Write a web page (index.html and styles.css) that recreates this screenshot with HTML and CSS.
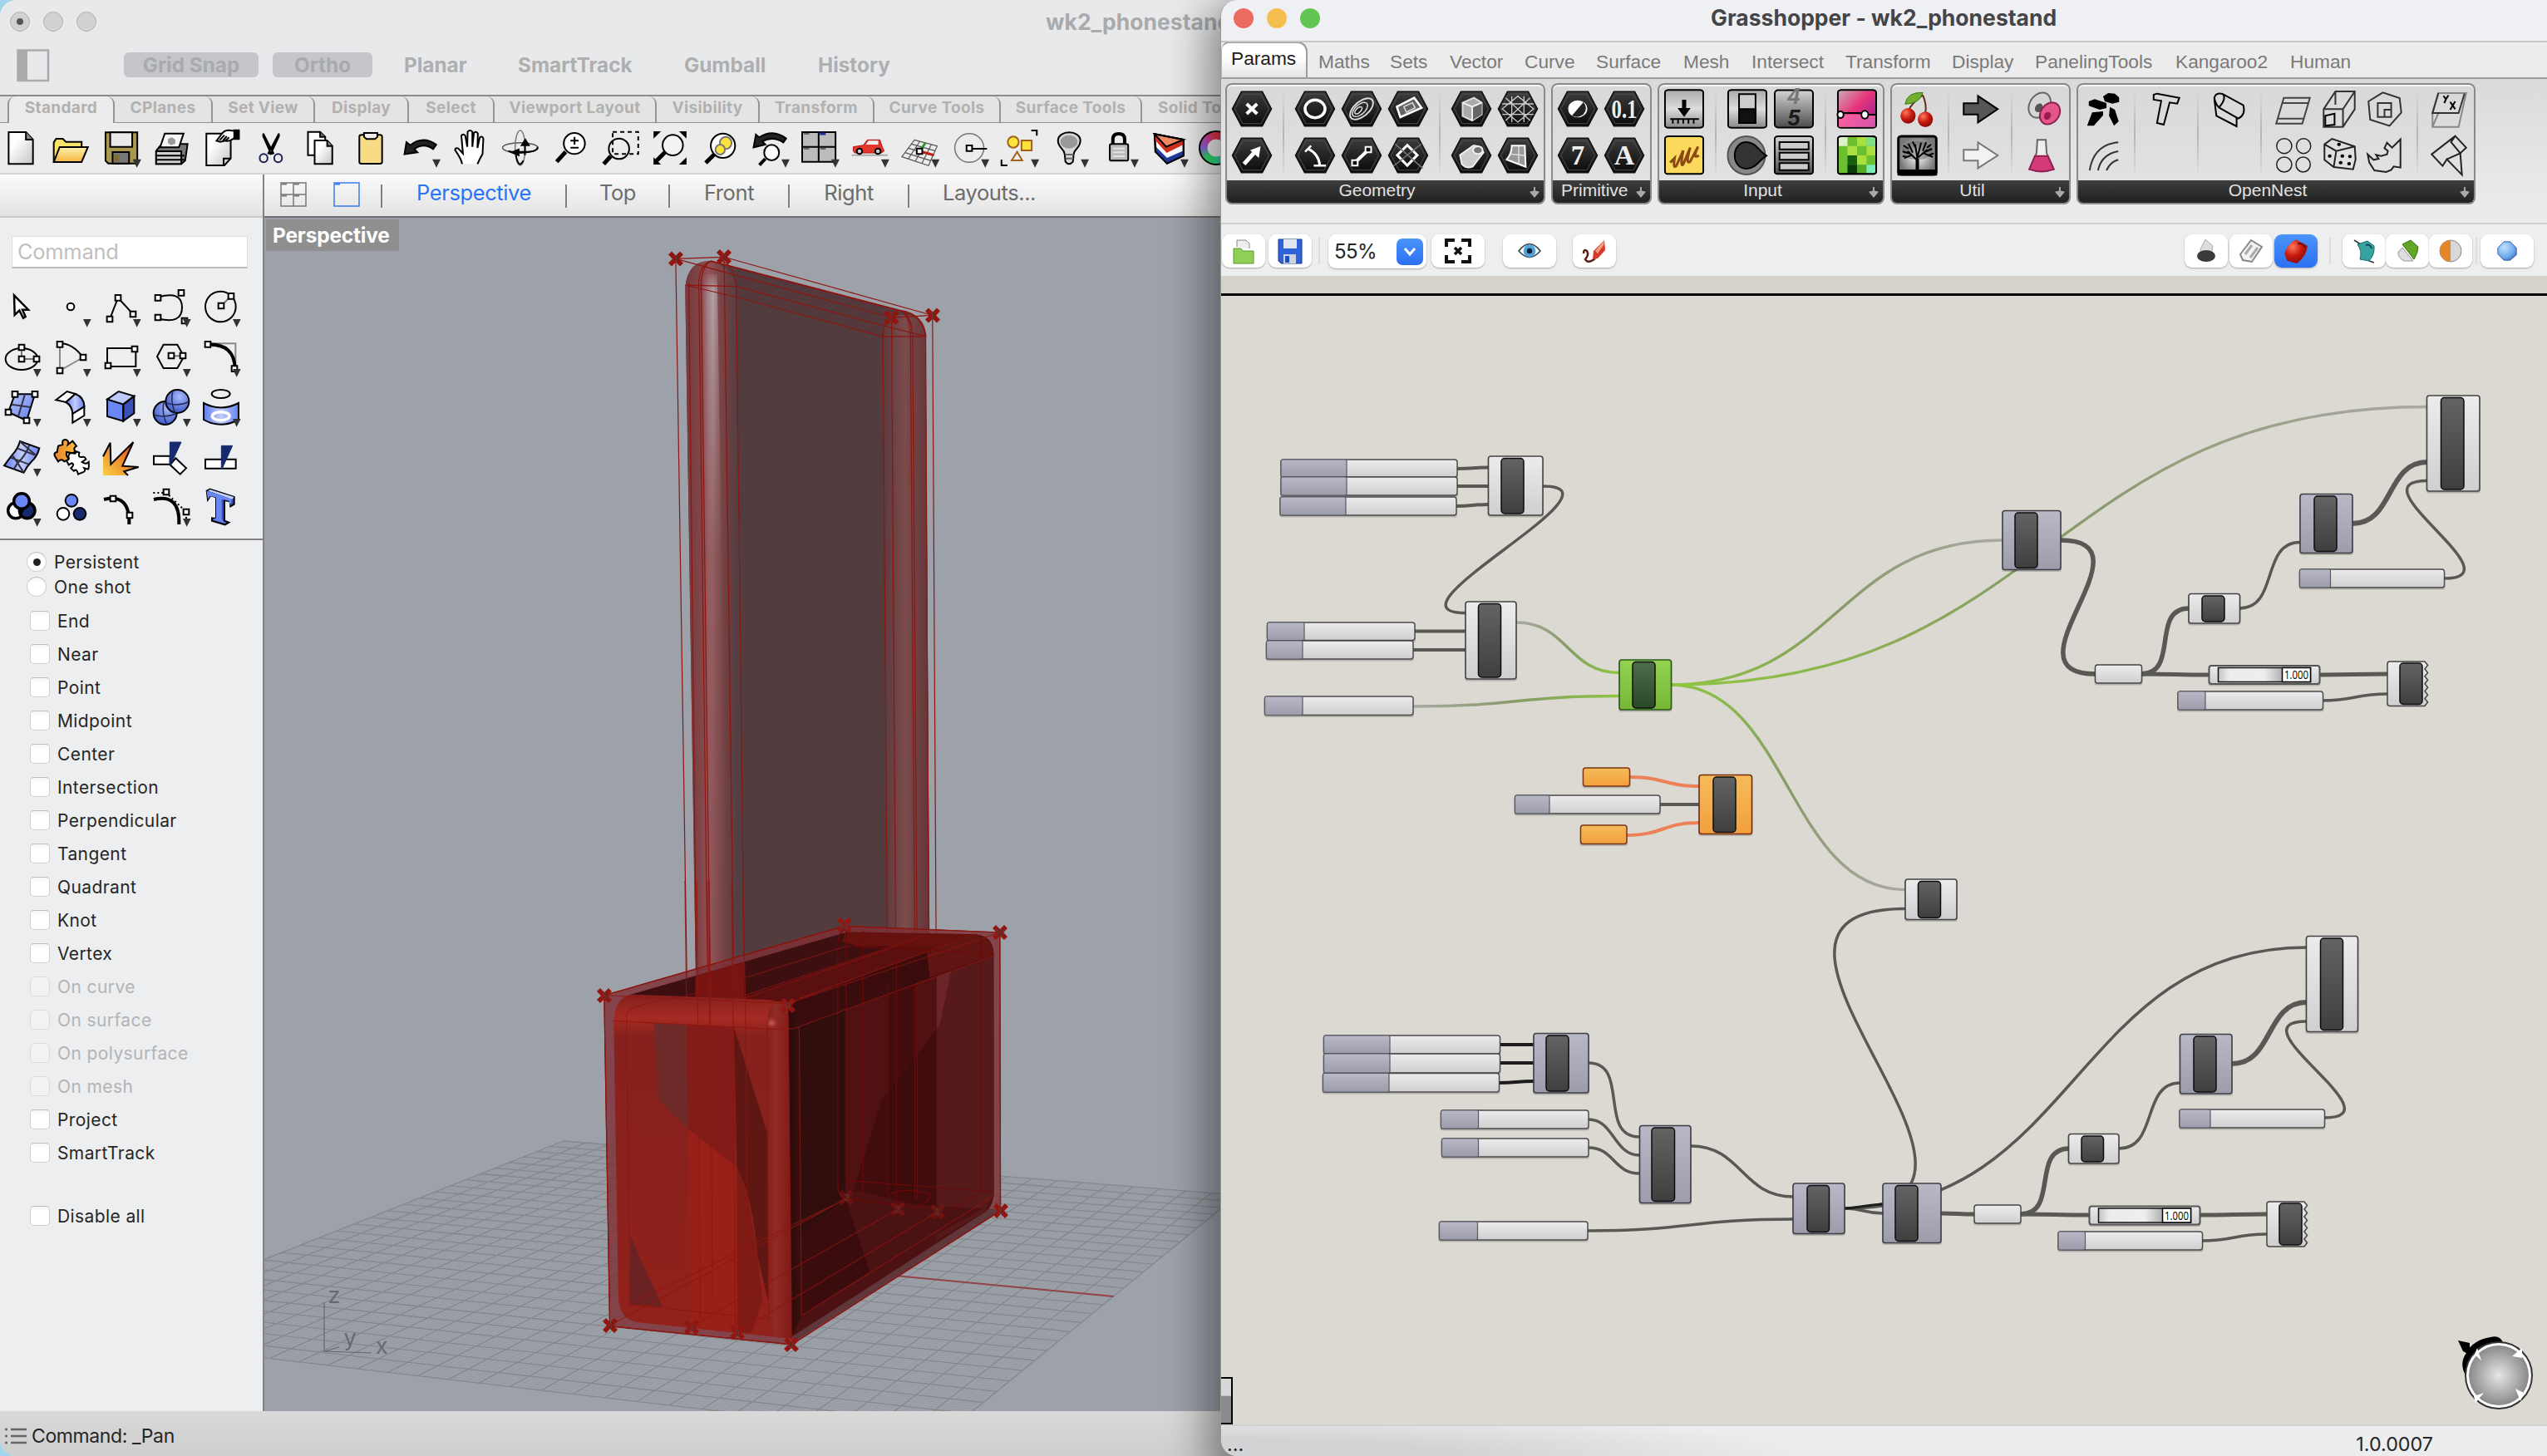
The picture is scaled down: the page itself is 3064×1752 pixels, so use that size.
FILE: index.html
```html
<!DOCTYPE html>
<html lang="en">
<head>
<meta charset="utf-8">
<title>Grasshopper - wk2_phonestand</title>
<link rel="stylesheet" href="styles.css">
</head>
<body>
<svg class="defs" width="0" height="0">
  <defs>
    <rect id="h" class="nss" x="-10" y="-10" width="20" height="20" fill="#fff" stroke="#000" stroke-width="2"/>
    <linearGradient id="gBlue" x1="0" y1="0" x2="1" y2="1"><stop offset="0" stop-color="#b9c6f8"/><stop offset="1" stop-color="#5f7cf0"/></linearGradient>
    <linearGradient id="gBlueH"><stop offset="0" stop-color="#5f7df2"/><stop offset=".5" stop-color="#c3cdf8"/><stop offset="1" stop-color="#6380f3"/></linearGradient>
    <radialGradient id="gBall" cx=".6" cy=".3" r=".7"><stop offset="0" stop-color="#a9b9fa"/><stop offset="1" stop-color="#3f5bc8"/></radialGradient>
    <linearGradient id="gFire" x1="0" y1="1" x2="1" y2="0"><stop offset="0" stop-color="#f8d048"/><stop offset=".5" stop-color="#ee8a2a"/><stop offset="1" stop-color="#dd3418"/></linearGradient>
    <linearGradient id="gPuz"><stop offset="0" stop-color="#e9852a"/><stop offset="1" stop-color="#f8bc3c"/></linearGradient>
    <linearGradient id="gPaper" x1="0" y1="0" x2="1" y2="1"><stop offset=".3" stop-color="#fff"/><stop offset="1" stop-color="#c4c4c4"/></linearGradient>
    <linearGradient id="gGold" x1="0" y1="0" x2="0" y2="1"><stop offset="0" stop-color="#fff3b0"/><stop offset="1" stop-color="#f2b33c"/></linearGradient>
    <linearGradient id="gGrey" x1="0" y1="0" x2="0" y2="1"><stop offset="0" stop-color="#aaa"/><stop offset=".5" stop-color="#ddd"/><stop offset="1" stop-color="#8a8a8a"/></linearGradient>
    <linearGradient id="gGreyDn" x1="0" y1="0" x2="0" y2="1"><stop offset="0" stop-color="#d4d4d4"/><stop offset="1" stop-color="#4c4c4c"/></linearGradient>
    <linearGradient id="gHex" x1="0" y1="0" x2="0" y2="1"><stop offset="0" stop-color="#3c3c3c"/><stop offset="1" stop-color="#0a0a0a"/></linearGradient>
    <linearGradient id="gPink" x1="0" y1="0" x2="1" y2="1"><stop offset="0" stop-color="#c8b0bc"/><stop offset=".45" stop-color="#e8377a"/><stop offset="1" stop-color="#8a1a9a"/></linearGradient>
    <radialGradient id="gRed" cx=".35" cy=".3" r=".8"><stop offset="0" stop-color="#ff7a5c"/><stop offset=".5" stop-color="#c81a10"/><stop offset="1" stop-color="#7c0806"/></radialGradient>
    <radialGradient id="gTree"><stop offset="0" stop-color="#fff"/><stop offset="1" stop-color="#777"/></radialGradient>
    <radialGradient id="gSky" cx=".35" cy=".3" r=".9"><stop offset="0" stop-color="#bfe2ff"/><stop offset=".6" stop-color="#6fa9ea"/><stop offset="1" stop-color="#2c5aa8"/></radialGradient>
    <g id="hex">
      <path class="nss" d="M24 -62 H-24 L-45 0 L-24 62 H24 L45 0Z" fill="url(#gHex)" stroke="#111" stroke-width="1.5"/>
      <path class="nss" d="M21 -53 H-21 L-39 0 L-21 53 H21 L39 0Z" fill="none" stroke="#4c4c4c" stroke-width="1"/>
    </g>
    <path id="mark" d="M-9 -5 L-5 -9 L0 -4 L5 -9 L9 -5 L4 0 L9 5 L5 9 L0 4 L-5 9 L-9 5 L-4 0Z" fill="#93150f"/>
  </defs>
</svg>

<main class="rhino">
  <header class="rh-title">
    <div class="lights off"><i class="edited"></i><i></i><i></i></div>
    <div class="doc">wk2_phonestand</div>
  </header>
  <div class="rh-modes">
    <svg class="side-ic" width="40" height="40" viewBox="0 0 40 40"><path d="M1.500 1.500H38V38H1.500Z" fill="none" stroke="#a9aaac" stroke-width="2.500"/><path d="M1 1H13V39H1Z" fill="#a9aaac"/></svg>
    <span class="pill p1">Grid Snap</span><span class="pill p2">Ortho</span>
    <span class="mode m1">Planar</span><span class="mode m2">SmartTrack</span><span class="mode m3">Gumball</span><span class="mode m4">History</span>
  </div>
  <nav class="rh-tabs">
    <span class="on" style="width:129px">Standard</span><span style="width:118px">CPlanes</span><span style="width:123px">Set View</span><span style="width:113px">Display</span><span style="width:103px">Select</span><span style="width:195px">Viewport Layout</span><span style="width:124px">Visibility</span><span style="width:138px">Transform</span><span style="width:152px">Curve Tools</span><span style="width:170px">Surface Tools</span><span class="lft" style="width:170px">Solid Tools</span>
  </nav>
  <div class="rh-tools">
    <svg class="ic" preserveAspectRatio="none" viewBox="-10.600 444 127.100 180"><path d="M22 477H66L84 504V592H22Z" fill="url(#gPaper)"/><path d="M66 477V504H84" fill="#888"/></svg>
    <svg class="ic" preserveAspectRatio="none" viewBox="116.500 444 127.100 180"><path d="M137 584V514L143 501H160L168 512H208V532" fill="#fbe36a"/><path d="M137 585L152 531H224L208 585Z" fill="url(#gGold)"/></svg>
    <svg class="ic" preserveAspectRatio="none" viewBox="243.700 444 127.100 180"><path d="M269 478H350V590H276L269 580Z" fill="#a89850"/><path d="M281 478H337V530H281Z" fill="#e9e9ec"/><path d="M287 549H329V590H287Z" fill="#777"/><path d="M292 558H304V582H292Z" fill="#7c6e30" stroke="none"/><path class="tri" d="M338 575H360L349 605Z"/></svg>
    <svg class="ic" preserveAspectRatio="none" viewBox="370.800 444 127.100 180"><path d="M398 545L412 520H478L472 580L462 592H398Z" fill="#777"/><path d="M398 546H462V592H398Z" fill="#d0d0d0"/><path d="M398 562H470M398 577H470"/><path d="M408 532L420 482H468L456 532Z" fill="#f6f6f6"/><path d="M428 502L438 496L447 504V518L436 524L428 516Z" fill="#999" stroke="none"/></svg>
    <svg class="ic" preserveAspectRatio="none" viewBox="497.900 444 127.100 180"><path d="M526 482H588V572L572 597H526Z" fill="url(#gPaper)"/><path d="M588 572H570V597"/><path d="M552 508L566 482Q574 468 588 471L606 474V498L596 500Q584 512 574 508L562 512Z" fill="#fff"/><path d="M597 470H609V502H597Z" fill="#000"/><path d="M560 506L572 488M567 510L578 492M575 508L584 496"/></svg>
    <svg class="ic" preserveAspectRatio="none" viewBox="625.100 444 127.100 180"><path d="M671 482L697 553L691 556L671 492ZM711 482L684 553L690 556L711 492Z" fill="#000"/><ellipse cx="672" cy="571" rx="10" ry="15" stroke="#1b2250"/><ellipse cx="709" cy="571" rx="10" ry="15" stroke="#1b2250"/></svg>
    <svg class="ic" preserveAspectRatio="none" viewBox="752.200 444 127.100 180"><path d="M785 476H816L829 494V560H785Z" fill="#fff"/><path d="M816 476V494H829" fill="#777"/><path d="M802 507H834L847 527V592H802Z" fill="url(#gPaper)"/><path d="M834 507V527H847" fill="#888"/></svg>
    <svg class="ic" preserveAspectRatio="none" viewBox="879.400 444 127.100 180"><rect x="916" y="487" width="58" height="104" rx="6" fill="#f7dc85"/><path d="M928 480H962V494L956 502H934L928 494Z" fill="#eee"/></svg>
    <svg class="ic" preserveAspectRatio="none" viewBox="1006.500 444 127.100 180"><path d="M1031 557L1036 513L1046 524Q1078 488 1112 522L1104 538Q1080 514 1056 538L1064 550Z" fill="#222"/><path class="tri" d="M1102 575H1123L1112.500 605Z"/></svg>
    <svg class="ic" preserveAspectRatio="none" viewBox="1133.600 444 127.100 180"><path d="M1178 592Q1176 574 1160 542Q1160 532 1168 536L1180 554L1176 490Q1180 480 1186 490L1191 530L1192 476Q1198 466 1204 476L1204 530L1208 480Q1214 472 1218 482L1217 534L1223 496Q1230 490 1232 500L1230 556Q1222 576 1217 592" fill="#fff"/></svg>
    <svg class="ic" preserveAspectRatio="none" viewBox="1260.800 444 127.100 180"><g stroke-width="1.500"><ellipse cx="1326" cy="533" rx="45" ry="18" stroke="#555"/><ellipse cx="1326" cy="534" rx="13" ry="63" stroke="#777"/></g><path d="M1296 546Q1326 556 1358 546Q1372 540 1370 530M1315 560Q1322 612 1334 580"/><path d="M1338 560V514M1314 548H1350"/><path d="M1330 524L1339 504L1348 524ZM1304 550L1322 540V560Z" fill="#000"/></svg>
    <svg class="ic" preserveAspectRatio="none" viewBox="1387.900 444 127.100 180"><path d="M1419 584L1442 548" stroke-width="5"/><ellipse cx="1464" cy="518" rx="27" ry="38" fill="#fff"/><path d="M1454 508H1475M1464.500 494V522M1454 533H1475"/></svg>

    <svg class="ic" preserveAspectRatio="none" viewBox="-31.800 444 127.100 180"><path d="M-8 592L10 564" stroke-width="5"/><path d="M15 476H80V556H15Z" stroke-dasharray="5 4"/><ellipse cx="31" cy="537" rx="26" ry="37" fill="none"/></svg>
    <svg class="ic" preserveAspectRatio="none" viewBox="95.300 444 127.100 180"><path d="M124 584L148 550" stroke-width="5"/><ellipse cx="168" cy="524" rx="26" ry="37" fill="#f3f3f3"/><path d="M119 474H138L119 500ZM203 474H184L203 500ZM119 594H138L119 568ZM203 594H184L203 568Z" fill="#000" stroke="none"/></svg>
    <svg class="ic" preserveAspectRatio="none" viewBox="222.500 444 127.100 180"><path d="M252 588L275 556" stroke-width="5"/><ellipse cx="296" cy="526" rx="31" ry="44" fill="#fff"/><g fill="#fbe33c" stroke="#777"><ellipse cx="303" cy="516" rx="15" ry="22"/><ellipse cx="289" cy="540" rx="12" ry="18"/></g></svg>
    <svg class="ic" preserveAspectRatio="none" viewBox="349.600 444 127.100 180"><path d="M374 532L380 486L388 496Q424 464 457 500L450 514Q424 490 396 510L404 522Z" fill="#222"/><path d="M389 596L404 573" stroke-width="4"/><ellipse cx="420" cy="551" rx="19" ry="28" fill="#fff"/><path class="tri" d="M445 575H466L455.500 605Z"/></svg>
    <svg class="ic" preserveAspectRatio="none" viewBox="476.800 444 127.100 180"><path d="M498 477H583V584H498Z" fill="#bcbcbc"/><path d="M540 477V584M498 530H583"/><path d="M502 483H516M502 537H516M544 537H558" stroke="#666" stroke-width="2"/><path d="M543 483H558" stroke="#1a2f9c" stroke-width="3"/><path class="tri" d="M572 575H593L582.500 605Z"/></svg>
    <svg class="ic" preserveAspectRatio="none" viewBox="603.900 444 127.100 180"><path d="M624 560H716" stroke="#aaa"/><path d="M628 545V530L654 524L664 505H696L702 530L707 545L700 552H632Z" fill="#e5352a" stroke="#b3160e" stroke-width="1"/><path d="M667 508H692V522H660Z" fill="#eee" stroke="none"/><ellipse cx="644" cy="546" rx="7" ry="10" fill="#ccc"/><ellipse cx="691" cy="546" rx="7" ry="10" fill="#ccc"/><path class="tri" d="M699 575H720L709.500 605Z"/></svg>
    <svg class="ic" preserveAspectRatio="none" viewBox="731 444 127.100 180"><g stroke="#555" stroke-width="1.200"><path d="M784 505L842 527L820 598L752 566ZM777 520L838 545M769 535L832 562M760 551L826 580M798 510L768 574M813 516L786 582M827 522L803 590"/></g><path d="M797 546L812 516" stroke="#35952a" stroke-width="3"/><path d="M797 546L834 560" stroke="#c31d12" stroke-width="3"/><path d="M790 536H804V556H790Z" fill="#fff"/><path class="tri" d="M827 575H848L837.500 605Z"/></svg>
    <svg class="ic" preserveAspectRatio="none" viewBox="858.200 444 127.100 180"><ellipse cx="924" cy="534" rx="37" ry="52" stroke="#777" stroke-width="1.500"/><path d="M924 537H969"/><path d="M917 525H931V545H917Z" fill="#fff"/><path class="tri" d="M954 575H975L964.500 605Z"/></svg>
    <svg class="ic" preserveAspectRatio="none" viewBox="985.300 444 127.100 180"><path d="M1082 471H1096V490M1006 576V597H1021"/><g stroke="#a0621c" fill="#fbe33c"><ellipse cx="1036" cy="513" rx="14" ry="20"/><path d="M1057 507H1083V543H1057Z"/><path d="M1046 548L1059 579H1032Z" fill="none"/></g><path class="tri" d="M1081 575H1102L1091.500 605Z"/></svg>
    <svg class="ic" preserveAspectRatio="none" viewBox="1112.400 444 127.100 180"><path d="M1167 556C1166 536 1150 534 1150 508C1150 468 1207 468 1207 508C1207 534 1192 536 1190 556L1188 584Q1178 600 1169 584Z" fill="#d8d8d8"/><ellipse cx="1178" cy="512" rx="22" ry="24" fill="#999" stroke="none"/><path d="M1168 558H1190M1169 572H1189" stroke="#666"/><path class="tri" d="M1208 575H1229L1218.500 605Z"/></svg>
    <svg class="ic" preserveAspectRatio="none" viewBox="1239.600 444 127.100 180"><path d="M1290 522V502Q1290 483 1305 483Q1320 483 1320 502V522" stroke-width="4"/><rect x="1282" y="520" width="47" height="60" rx="5" fill="#bbb"/><path d="M1290 536H1320M1290 550H1320M1290 564H1320" stroke="#e4e4e4"/><path class="tri" d="M1335 575H1356L1345.500 605Z"/></svg>
    <svg class="ic" preserveAspectRatio="none" viewBox="1366.700 444 127.100 180"><path d="M1396 484L1470 504V562L1428 590L1400 548Z" fill="#fff"/><path d="M1396 484L1470 504L1425 532Z" fill="#f08a62"/><path d="M1425 532L1470 504V522L1427 552L1400 510L1396 490Z" fill="#d4301c" stroke="none"/><path d="M1428 570L1470 544V562L1428 590L1400 552V530Z" fill="#1e3a9c" stroke="none"/><path d="M1396 484L1470 504V562L1428 590L1398 548ZM1396 484L1426 530L1470 504"/><path class="tri" d="M1462 575H1483L1472.500 605Z"/></svg>
    <div class="wheel"></div>
  </div>

  <div class="rh-body">
    <aside class="panel">
      <div class="panel-head"></div>
      <div class="cmd">Command</div>
      <div class="toolgrid">
        <svg class="ic" viewBox="-15 207 180 180"><path d="M51 256L102 308L81 308L92 333L84 338L70 311L53 327Z" fill="#fff" stroke-width="2.500"/></svg>
        <svg class="ic" viewBox="165 207 180 180"><circle cx="255" cy="297" r="13" fill="#fff"/><path class="tri" d="M300 342H329L314 371Z"/></svg>
        <svg class="ic" viewBox="345 207 180 180"><path d="M396 342L426 265L480 324"/><use href="#h" x="396" y="342"/><use href="#h" x="426" y="265"/><use href="#h" x="480" y="324"/><path class="tri" d="M480 342H509L494 371Z"/></svg>
        <svg class="ic" viewBox="525 207 180 180"><path d="M570 263Q657 238 657 300Q657 362 570 340"/><use href="#h" x="570" y="265"/><use href="#h" x="654" y="247"/><use href="#h" x="570" y="336"/><use href="#h" x="666" y="348"/><path class="tri" d="M660 342H689L674 371Z"/></svg>
        <svg class="ic" viewBox="705 207 180 180"><circle cx="796" cy="297" r="55"/><path d="M798 294L834 259" stroke="#777"/><use href="#h" x="798" y="294"/><use href="#h" x="834" y="259"/><path class="tri" d="M840 342H869L854 371Z"/></svg>

        <svg class="ic" viewBox="-15 387 180 180"><ellipse cx="78" cy="486" rx="58" ry="39"/><path d="M78 445V486H132" stroke="#777"/><use href="#h" x="78" y="444"/><use href="#h" x="78" y="486"/><use href="#h" x="132" y="486"/><path class="tri" d="M120 522H149L134 551Z"/></svg>
        <svg class="ic" viewBox="165 387 180 180"><path d="M216 528V433M216 528L300 480" stroke="#888"/><path d="M216 430Q260 428 300 480"/><use href="#h" x="216" y="433"/><use href="#h" x="300" y="480"/><use href="#h" x="216" y="528"/><path class="tri" d="M300 522H329L314 551Z"/></svg>
        <svg class="ic" viewBox="345 387 180 180"><path d="M387 447H490V513H387Z"/><use href="#h" x="486" y="450"/><use href="#h" x="390" y="510"/><path class="tri" d="M480 522H509L494 551Z"/></svg>
        <svg class="ic" viewBox="525 387 180 180"><path d="M590 434H640L664 477L640 519H590L567 477Z"/><path d="M618 475H660" stroke="#777"/><use href="#h" x="618" y="474"/><use href="#h" x="660" y="474"/><path class="tri" d="M660 522H689L674 551Z"/></svg>
        <svg class="ic" viewBox="705 387 180 180"><path d="M750 430H850V520" stroke="#888"/><path d="M750 434Q846 430 848 520" stroke-width="4"/><use href="#h" x="750" y="433"/><use href="#h" x="846" y="521"/><path class="tri" d="M840 522H869L854 551Z"/></svg>

        <svg class="ic" viewBox="-15 567 180 180"><path d="M54 613H126L96 708L30 678Z" fill="url(#gBlue)"/><path d="M90 613L66 693M42 650L110 660" stroke="#334"/><use href="#h" x="54" y="613"/><use href="#h" x="126" y="613"/><use href="#h" x="30" y="678"/><use href="#h" x="96" y="708"/><path class="tri" d="M120 702H149L134 731Z"/></svg>
        <svg class="ic" viewBox="165 567 180 180"><path d="M202 634L242 603L272 612L238 642Z" fill="#fff"/><path d="M272 612Q304 624 304 658L262 684Q260 654 238 642Z" fill="url(#gBlueH)"/><path d="M304 658V690L262 716V684Z" fill="#fff"/><path class="tri" d="M300 702H329L314 731Z"/></svg>
        <svg class="ic" viewBox="345 567 180 180"><path d="M387 632L428 603L484 620L445 650Z" fill="#bccaf9"/><path d="M387 632L445 650V710L387 693Z" fill="#6b87f6"/><path d="M445 650L484 620V682L445 710Z" fill="#3950b6"/><path class="tri" d="M480 702H509L494 731Z"/></svg>
        <svg class="ic" viewBox="525 567 180 180"><circle cx="596" cy="681" r="42" fill="url(#gBall)"/><circle cx="640" cy="639" r="42" fill="url(#gBall)"/><path d="M598 644Q640 660 682 640M624 600Q614 640 632 680M556 688Q596 700 634 684M592 640Q582 680 602 722" stroke="#222a55" stroke-width="1.500"/><path class="tri" d="M660 702H689L674 731Z"/></svg>
        <svg class="ic" viewBox="705 567 180 180"><ellipse cx="797" cy="612" rx="33" ry="15"/><path d="M735 645Q797 678 861 645V705Q797 740 735 705Z" fill="url(#gBlueH)"/><ellipse cx="797" cy="692" rx="31" ry="15" stroke="#fff" stroke-width="3.500"/><path class="tri" d="M840 702H869L854 731Z"/></svg>

        <svg class="ic" viewBox="-15 747 180 180"><path d="M72 783L142 808Q134 840 112 858Q98 872 86 896L15 871Q30 850 44 832Q64 812 72 783Z" fill="url(#gBlueH)"/><path d="M106 796Q98 822 78 846Q60 862 50 884M62 808L130 834M38 842L104 866M72 784L130 834M44 832L86 896" stroke="#334"/><path class="tri" d="M120 882H149L134 911Z"/></svg>
        <svg class="ic" viewBox="165 747 180 180"><path d="M210 800L226 795Q222 776 237 777Q250 780 245 795L262 782L276 800Q262 808 272 820L262 826L240 822Q236 838 252 848L232 856Q222 844 210 856L200 840Q190 824 206 822Z" fill="url(#gPuz)"/><path d="M252 826L264 826Q272 830 276 820L286 824Q280 842 296 840Q306 836 310 848L296 858Q310 868 320 858Q322 880 318 884L304 880Q312 892 296 896L282 902Q278 880 266 890L256 880Q272 866 258 862L248 868L240 852Q254 850 246 838Z" fill="#fff"/></svg>
        <svg class="ic" viewBox="345 747 180 180"><path d="M372 906V834L398 788L402 866L481 786L444 872L500 876L448 892L462 906Z" fill="url(#gFire)" stroke="none"/><path d="M372 838L398 788L400 866L481 786L442 872L500 876L448 892L462 906"/></svg>
        <svg class="ic" viewBox="525 747 180 180"><path d="M555 836H614V866H555ZM614 868L634 844L672 880L650 902Z" fill="#fff"/><path d="M613 786H654L616 868H613Z" fill="#172a6e" stroke="#172a6e" stroke-width="1"/></svg>
        <svg class="ic" viewBox="705 747 180 180"><path d="M741 848H851V881H741Z" fill="#fff"/><path d="M799 799H839L802 881H799Z" fill="#172a6e" stroke="#172a6e" stroke-width="1"/></svg>

        <svg class="ic" viewBox="-15 927 180 180"><g stroke-width="3.500"><circle cx="57" cy="1033" r="28" fill="#fff"/><circle cx="98" cy="1033" r="28" fill="#172a6e"/><circle cx="78" cy="999" r="28" fill="#6b87f6"/></g><path d="M68 1026H90L79 1046Z" fill="#000" stroke="none"/><path class="tri" d="M120 1062H149L134 1091Z"/></svg>
        <svg class="ic" viewBox="165 927 180 180"><circle cx="258" cy="997" r="22" fill="#6b87f6"/><circle cx="228" cy="1045" r="22" fill="#fff"/><circle cx="288" cy="1045" r="22" fill="#172a6e"/></svg>
        <svg class="ic" viewBox="345 927 180 180"><path d="M375 993Q470 970 466 1083" stroke-width="4"/><use href="#h" x="408" y="990"/><use href="#h" x="468" y="1050"/></svg>
        <svg class="ic" viewBox="525 927 180 180"><path d="M555 993Q650 970 646 1083" stroke-width="4"/><path d="M553 969H600L672 1038V1084" stroke-dasharray="2 3"/><use href="#h" x="600" y="966"/><use href="#h" x="672" y="1038"/><path class="tri" d="M660 1062H689L674 1091Z"/></svg>
        <svg class="ic" viewBox="705 927 180 180"><path d="M746 962L758 956L845 984V1010L832 1018L830 1000L810 996V1070L826 1076L812 1084L765 1070V1060L780 1062V986L760 978L750 994Z" fill="#3950b6"/><path d="M746 962L836 992L832 1016L826 998L800 992V1066L814 1080L768 1066L780 1060V986L758 980L750 992Z" fill="#6b87f6" stroke="none"/><path d="M752 962L758 957L844 984L838 992Z" fill="#c6d1fa" stroke="none"/></svg>
      </div>
      <div class="snaps">
        <label class="rad"><i class="sel"></i>Persistent</label>
        <label class="rad"><i></i>One shot</label>
        <div class="checks">
          <label><i></i>End</label><label><i></i>Near</label><label><i></i>Point</label><label><i></i>Midpoint</label><label><i></i>Center</label><label><i></i>Intersection</label><label><i></i>Perpendicular</label><label><i></i>Tangent</label><label><i></i>Quadrant</label><label><i></i>Knot</label><label><i></i>Vertex</label><label class="dis"><i></i>On curve</label><label class="dis"><i></i>On surface</label><label class="dis"><i></i>On polysurface</label><label class="dis"><i></i>On mesh</label><label><i></i>Project</label><label><i></i>SmartTrack</label><label class="last"><i></i>Disable all</label>
        </div>
      </div>
    </aside>
    <section class="view">
      <div class="viewbar">
        <svg width="32" height="30" viewBox="0 0 32 30"><path d="M1 1H31V29H1ZM16 1V29M1 15H31" fill="none" stroke="#777" stroke-width="1.500"/><path d="M2 2.500H8M17 2.500H23M2 16.500H8M17 16.500H23" stroke="#777" stroke-width="2"/></svg>
        <svg class="one" width="32" height="30" viewBox="0 0 32 30"><path d="M1 1H31V29H1Z" fill="none" stroke="#3b7cf0" stroke-width="1.500"/><path d="M2 2.500H8" stroke="#2a73f5" stroke-width="2"/></svg>
        <b style="margin-left:25px"></b><span class="cur" style="width:220px">Perspective</span><b></b><span style="width:122px">Top</span><b></b><span style="width:142px">Front</span><b></b><span style="width:142px">Right</span><b></b><span style="width:192px">Layouts...</span>
      </div>
      <div class="scene">
        <svg id="viewport" width="1150" height="1436" viewBox="318 262 1150 1436">
          <defs>
            <linearGradient id="sl" gradientUnits="userSpaceOnUse" x1="385" y1="0" x2="552" y2="0"><stop offset="0" stop-color="#763c40"/><stop offset=".28" stop-color="#834548"/><stop offset=".42" stop-color="#925256"/><stop offset=".55" stop-color="#854a4d"/><stop offset=".8" stop-color="#6c3f41"/><stop offset="1" stop-color="#523f44"/></linearGradient>
            <linearGradient id="shine"><stop offset="0" stop-color="#b4abb0" stop-opacity="0"/><stop offset=".45" stop-color="#b4abb0"/><stop offset="1" stop-color="#b08084" stop-opacity="0"/></linearGradient>
            <linearGradient id="fade" x1="0" y1="0" x2="0" y2="1"><stop offset="0" stop-color="#000"/><stop offset=".03" stop-color="#eee"/><stop offset=".15" stop-color="#aaa"/><stop offset=".4" stop-color="#333"/><stop offset="1" stop-color="#0c0c0c"/></linearGradient>
            <mask id="fadem" maskUnits="userSpaceOnUse" x="400" y="120" width="160" height="1600"><rect x="400" y="120" width="160" height="1600" fill="url(#fade)"/></mask>
            <linearGradient id="sr" gradientUnits="userSpaceOnUse" x1="1042" y1="0" x2="1190" y2="0"><stop offset="0" stop-color="#573b3f"/><stop offset=".25" stop-color="#6b4245"/><stop offset=".5" stop-color="#7c4c4c"/><stop offset=".7" stop-color="#714244"/><stop offset="1" stop-color="#67383a"/></linearGradient>
            <linearGradient id="fr" x1="0" y1="0" x2="0" y2="1"><stop offset="0" stop-color="#84211c"/><stop offset=".07" stop-color="#a62a23"/><stop offset=".12" stop-color="#86211d"/><stop offset="1" stop-color="#92211b"/></linearGradient>
            <linearGradient id="col"><stop offset="0" stop-color="#84201b"/><stop offset=".35" stop-color="#902a25"/><stop offset="1" stop-color="#801a15"/></linearGradient>
            <linearGradient id="darkcol"><stop offset="0" stop-color="#2c0909"/><stop offset="1" stop-color="#3a1010"/></linearGradient>
            <radialGradient id="spot"><stop offset="0" stop-color="#c8605a"/><stop offset="1" stop-color="#a82a22" stop-opacity="0"/></radialGradient>
          </defs>
          <g id="floor"></g>
          <g class="edge" transform="translate(690 260) scale(.35714 .5357)">
            <path d="M376 160Q384 100 462 101L1105 213Q1180 225 1186 270L1200 1730H412Z" fill="#523c3d" stroke="none"/>
            <path d="M376 160Q386 104 445 102Q530 104 548 158L576 1730H412Z" fill="url(#sl)" stroke="none"/>
            <path d="M428 130H484L520 1700H456Z" fill="url(#shine)" stroke="none" mask="url(#fadem)"/>
            <path d="M1042 268Q1046 224 1075 222L1130 222Q1182 228 1186 270L1200 1730H1058Z" fill="url(#sr)" stroke="none"/>
            <path d="M548 118L1105 213L1060 240Q1044 248 1042 268L548 180Z" fill="#53393b" stroke="none"/>
            <path d="M344 96L507 92L1209 223L1071 228ZM344 96L382 1730M507 92L540 1730M1071 228L1086 1730M1209 223L1222 1730"/>
            <path d="M376 155L548 158L1042 246L1186 270L1042 271L548 182ZM388 150L414 1730M422 150Q424 110 462 101M422 150L452 1730M430 150Q434 108 465 101M430 150L460 1730M548 158Q540 108 500 102M548 158L575 1730M1042 268L1058 1730M1042 268Q1046 228 1075 222M1135 268Q1134 230 1108 214M1135 268L1150 1730M1142 268Q1140 232 1115 216M1142 268L1158 1730M1186 268L1197 1730"/>
            <path d="M462 101L1105 213Q1178 222 1186 270" stroke-width="2"/>
          </g>
          <g class="edge" transform="translate(690 1060) scale(.35714 .38265)">
            <path d="M103 360L912 142L1436 162L1438 1037L735 1458L122 1400Z" fill="#7e3036" fill-opacity=".82"/>
            <path d="M733 1455L1438 1037L1400 1030L733 1400Z" fill="#5f363a" stroke="none"/>
            <path d="M190 358L905 165L1350 168L722 388Z" fill="#3d0f10" stroke="none"/>
            <path d="M410 299L575 255V372L410 366Z" fill="#8e1812" fill-opacity=".7" stroke="none"/>
            <path d="M570 370L1050 215L1190 165L1360 168L722 388Z" fill="#5a100f" stroke="none"/>
            <path d="M915 160L1360 168L1240 208L960 205L905 192Z" fill="#65120f" stroke="none"/>
            <path d="M722 388L1350 168Q1415 172 1415 230L1416 985Q1410 1030 1380 1045L733 1435Z" fill="#4c1213" stroke="none"/>
            <path d="M722 388L1350 168Q1412 176 1415 232L760 458Z" fill="#3a0c0d" stroke="none"/>
            <path d="M1190 225L1350 168Q1412 176 1415 232L1200 303Z" fill="#611512" stroke="none"/>
            <path d="M760 458L918 405V1000L765 1120Z" fill="#300e0e" stroke="none"/>
            <path d="M918 405L1222 300V1000L945 975L918 1005Z" fill="#470d0d" stroke="none"/>
            <path d="M1222 300L1272 284L1235 450L1222 470Z" fill="#6b2427" stroke="none"/>
            <path d="M1222 470L1235 450L1272 284L1415 235V985L1385 1040L1222 1130Z" fill="#561a1b" stroke="none"/>
            <path d="M1222 470L1040 685L985 850L945 970L918 1005V405L1222 300V470Z" fill="#4f1112" stroke="none"/>
            <path d="M1222 470L1040 685L985 850L945 970L1222 1035Z" fill="#400c0d" stroke="none"/>
            <path d="M1058 350L1152 320V990H1058Z" fill="#380909" fill-opacity=".5" stroke="none"/>
            <path d="M765 1120L918 1005L998 1228L768 1366Z" fill="#3a0c0d" stroke="none"/>
            <path d="M918 1005L1380 1030L998 1228Z" fill="#4a1213" stroke="none"/>
            <path d="M722 388Q758 400 760 460L768 1370L733 1435Z" fill="url(#darkcol)" stroke="none"/>
            <path d="M135 440Q140 362 200 357L655 374Q722 380 724 440L734 1440L215 1388Q155 1380 151 1310Z" fill="url(#fr)" stroke="none"/>
            <path d="M270 448L380 452L386 780L288 690Z" fill="#6f2b2a" stroke="none"/>
            <path d="M380 452L540 460L545 900L386 780Z" fill="#831c18" stroke="none"/>
            <path d="M540 460L655 800V1320L620 1180Q605 1000 550 900Z" fill="#5f1713" stroke="none"/>
            <path d="M386 780L550 900L552 1420L396 1406Z" fill="#982018" stroke="none"/>
            <path d="M550 900Q605 1000 635 1320L600 1420L552 1420Z" fill="#7e1b15" stroke="none"/>
            <path d="M190 1115L300 1340L190 1332Z" fill="#6b2222" stroke="none"/>
            <path d="M651 440Q660 378 695 378Q722 385 724 440L734 1436H690Q660 1430 657 1370Z" fill="url(#col)" stroke="none"/>
            <ellipse cx="667" cy="446" rx="24" ry="22" fill="url(#spot)" stroke="none"/>
            <g stroke="#6b0a08"><path d="M890 200V960Q892 995 918 1000L1200 1030M918 150V1000M975 200V960Q972 1010 918 1000M1058 330V990M1087 230V1030M1150 325V1000M1158 322V1000M1374 180V980L1220 1060M920 205L1415 228M920 942L1415 978M1062 990Q1100 960 1200 985Q1200 1010 1160 1020M975 155Q976 180 975 200M890 200Q892 160 918 150"/></g>
            <path d="M103 360L722 385L735 1458M722 385L1436 162M135 440L651 465Q740 470 760 458L1415 235M760 458L768 1366L1416 990M178 420L190 1332L657 1378M190 1332L918 1000M375 0L380 365M415 0L427 1380M450 0L460 500M457 0L468 1300M533 0L545 1400M570 0L580 460L587 1378M651 440L657 1378M570 370L1060 215M545 370L1190 170M760 370L1350 168M178 420Q180 390 380 362M380 362L920 205M122 1398L918 1000M397 1400L1087 1035M551 1420L1227 1040" stroke-opacity=".75"/>
            <path d="M103 360L122 1400L735 1458L1438 1037L1436 162L912 142Z" stroke-width="1.200"/>
          </g>
          <g class="marks">
            <use href="#mark" x="813" y="311.500"/><use href="#mark" x="871" y="309"/><use href="#mark" x="1072.500" y="382"/><use href="#mark" x="1122" y="379.500"/>
            <use href="#mark" x="727" y="1198"/><use href="#mark" x="948" y="1210"/><use href="#mark" x="1016" y="1113"/><use href="#mark" x="1203" y="1122"/><use href="#mark" x="1204" y="1457"/><use href="#mark" x="734" y="1595"/><use href="#mark" x="832" y="1597"/><use href="#mark" x="887" y="1603"/><use href="#mark" x="952" y="1618"/>
            <g opacity=".45"><use href="#mark" x="1018" y="1441"/><use href="#mark" x="1080" y="1455"/><use href="#mark" x="1128" y="1458"/></g>
            <text x="813" y="315">3</text><text x="871" y="313">0</text><text x="1072" y="386">2</text><text x="1122" y="383">1</text>
            <text x="727" y="1202">3</text><text x="948" y="1214">0</text><text x="1016" y="1118">61</text><text x="1203" y="1126">10</text><text x="734" y="1599">3</text><text x="832" y="1601">3</text><text x="887" y="1608">0</text><text x="952" y="1622">0</text><text x="1019" y="1445">2</text><text x="1080" y="1459">2</text><text x="1128" y="1462">1</text><text x="1204" y="1461">1</text>
          </g>
          <path d="M390 1567V1626L447 1628M390 1626L408 1621" fill="none" stroke="#666" stroke-width="1.200"/>
          <g class="axis"><text x="402" y="1568">z</text><text x="421" y="1619">y</text><text x="459" y="1629">x</text></g>
        </svg>
        <div class="vlabel">Perspective</div>
      </div>
    </section>
  </div>
  <footer class="rh-status"><svg width="26" height="22" viewBox="0 0 26 22"><path d="M0 3H3M7 3H26M0 11H3M7 11H26M0 19H3M7 19H26" stroke="#666" stroke-width="2.500"/></svg><span>Command: _Pan</span></footer>
</main>

<section class="gh">
  <header class="gh-title"><div class="lights"><i></i><i></i><i></i></div><h1>Grasshopper - wk2_phonestand</h1></header>
  <nav class="gh-tabs"><span class="on">Params</span><span style="width:86px">Maths</span><span style="width:72px">Sets</span><span style="width:90px">Vector</span><span style="width:86px">Curve</span><span style="width:105px">Surface</span><span style="width:82px">Mesh</span><span style="width:113px">Intersect</span><span style="width:128px">Transform</span><span style="width:100px">Display</span><span style="width:169px">PanelingTools</span><span style="width:138px">Kangaroo2</span><span>Human</span></nav>
  <div class="ribbon">
    <div class="grp" style="width:385px"><div class="cells">
      <div class="c1">
        <svg class="rb" preserveAspectRatio="none" viewBox="34.500 308 107.100 168"><use href="#hex" x="88" y="392"/><path d="M76 374L100 410M100 374L76 410" stroke-width="4"/></svg>
        <svg class="rb" preserveAspectRatio="none" viewBox="34.500 477 107.100 168"><use href="#hex" x="88" y="561"/><path d="M70 592L94 550" stroke-width="5"/><path d="M84 542L108 528L104 570Z" fill="#fff" stroke="none"/></svg>
      </div><hr>
      <div class="c3">
        <svg class="rb" preserveAspectRatio="none" viewBox="179.500 308 107.100 168"><use href="#hex" x="233" y="392"/><ellipse cx="233" cy="392" rx="23" ry="32" stroke-width="3.500"/></svg>
        <svg class="rb" preserveAspectRatio="none" viewBox="286.500 308 107.100 168"><use href="#hex" x="340" y="392"/><g transform="rotate(28 340 392)" stroke="#ddd"><ellipse cx="340" cy="392" rx="20" ry="42"/><ellipse cx="338" cy="396" rx="13" ry="28" stroke-width="1.500"/><ellipse cx="336" cy="400" rx="6" ry="14" stroke-width="1.500"/></g></svg>
        <svg class="rb" preserveAspectRatio="none" viewBox="394.500 308 107.100 168"><use href="#hex" x="448" y="392"/><path d="M422 384L462 352L479 388L430 422Z" fill="#666" stroke-width="2.500"/><path d="M438 384L458 370L464 388L444 404Z" stroke="#ddd" stroke-width="1.500"/></svg>
        <svg class="rb" preserveAspectRatio="none" viewBox="179.500 477 107.100 168"><use href="#hex" x="233" y="561"/><path d="M216 536Q242 556 244 598" stroke-width="3"/><path d="M210 548L224 526M230 598H258" stroke-width="2.500"/></svg>
        <svg class="rb" preserveAspectRatio="none" viewBox="286.500 477 107.100 168"><use href="#hex" x="340" y="561"/><path d="M324 588L356 540" stroke-width="4"/><path d="M318 578H331V598H318ZM349 530H362V550H349Z" fill="#111" stroke-width="2"/></svg>
        <svg class="rb" preserveAspectRatio="none" viewBox="394.500 477 107.100 168"><use href="#hex" x="448" y="561"/><path d="M446 524L469 560L446 597L423 560Z" stroke-width="3"/><path d="M418 520L482 608M478 520L414 600" stroke="#777" stroke-width="1.500"/></svg>
      </div><hr>
      <div class="c2">
        <svg class="rb" preserveAspectRatio="none" viewBox="538.500 308 107.100 168"><use href="#hex" x="592" y="392"/><path d="M572 370L598 352L616 370V412L594 434L572 418Z" fill="#aaa" stroke="#ddd"/><path d="M594 384L616 370V412L594 434Z" fill="#666" stroke="none"/><path d="M572 370L594 384L616 370M594 384V434" stroke="#eee"/></svg>
        <svg class="rb" preserveAspectRatio="none" viewBox="646.500 308 107.100 168"><use href="#hex" x="700" y="392"/><path d="M686 346V440M714 346V440M664 374H736M664 412H736M672 352L728 434M728 352L672 434M664 392L700 346L736 392L700 440Z" stroke="#ccc" stroke-width="1.300"/></svg>
        <svg class="rb" preserveAspectRatio="none" viewBox="538.500 477 107.100 168"><use href="#hex" x="592" y="561"/><path d="M566 560L596 526Q610 522 620 550L596 600Q582 612 570 592Z" fill="#ccc" stroke="#eee"/><ellipse cx="607" cy="542" rx="11" ry="14" fill="#777" stroke="#eee"/></svg>
        <svg class="rb" preserveAspectRatio="none" viewBox="646.500 477 107.100 168"><use href="#hex" x="700" y="561"/><path d="M686 526H716L718 602L674 576Q686 556 686 526Z" fill="#999" stroke="#fff"/><path d="M702 526V594M682 556L717 562" stroke="#ddd" stroke-width="1.500"/></svg>
      </div></div><footer>Geometry</footer></div>
    <div class="grp" style="width:121px"><div class="cells"><div class="c2">
        <svg class="rb" preserveAspectRatio="none" viewBox="783.500 308 107.100 168"><use href="#hex" x="837" y="392"/><ellipse cx="837" cy="392" rx="22" ry="31" fill="#fff" stroke="none"/><path d="M824 416L850 368Q862 388 850 412Q836 428 824 416Z" fill="#222" stroke="none"/></svg>
        <svg class="rb" viewBox="-28 -28 56 56"><g transform="scale(.523 .333)"><use href="#hex"/></g><text class="tx" y="11" font-size="32" textLength="31" lengthAdjust="spacingAndGlyphs">0.1</text></svg>
        <svg class="rb" viewBox="-28 -28 56 56"><g transform="scale(.523 .333)"><use href="#hex"/></g><text class="tx" y="11" font-size="33">7</text></svg>
        <svg class="rb" viewBox="-28 -28 56 56"><g transform="scale(.523 .333)"><use href="#hex"/></g><text class="tx" y="11" font-size="34">A</text></svg>
      </div></div><footer class="l">Primitive</footer></div>
    <div class="grp" style="width:273px"><div class="cells"><div class="c1">
        <svg class="rb dk" preserveAspectRatio="none" viewBox="1028.500 311 107.100 168"><rect x="1038" y="327" width="88" height="136" rx="8" fill="url(#gGrey)"/><path d="M1082 362V406" stroke-width="5"/><path d="M1067 392H1097L1082 424Z" fill="#000" stroke="none"/><path d="M1050 432H1116M1056 432V448M1068 432V448M1080 432V448M1092 432V448M1104 432V448"/></svg>
        <svg class="rb dk" preserveAspectRatio="none" viewBox="1028.500 480 107.100 168"><rect x="1038" y="495" width="88" height="136" rx="8" fill="#fbd95c"/><path d="M1050 590L1060 574Q1056 614 1064 602L1080 546Q1072 610 1080 596L1096 536Q1084 600 1096 586L1114 532Q1100 580 1116 564" stroke="#8a4a12" stroke-width="3"/></svg>
      </div><hr><div class="c2">
        <svg class="rb dk" preserveAspectRatio="none" viewBox="1174.500 311 107.100 168"><rect x="1184" y="327" width="88" height="136" rx="8" fill="url(#gGrey)"/><path d="M1209 342H1247V446H1209Z" fill="#ccc"/><path d="M1209 396H1247V446H1209Z" fill="#111"/></svg>
        <svg class="rb dk" viewBox="-28 -28 56 56"><rect x="-23" y="-22.500" width="46" height="45" rx="4" fill="url(#gGreyDn)"/><g class="tx num"><text y="-6" fill="#777">4</text><text y="20" fill="#1a1a1a">5</text></g></svg>
        <svg class="rb dk" preserveAspectRatio="none" viewBox="1174.500 480 107.100 168"><ellipse cx="1226" cy="564" rx="43" ry="69" fill="#888" stroke="#555"/><path d="M1226 516C1190 516 1190 612 1226 612C1246 612 1254 584 1272 565C1254 546 1246 516 1226 516Z" fill="#333"/></svg>
        <svg class="rb dk" preserveAspectRatio="none" viewBox="1281.500 480 107.100 168"><rect x="1291" y="495" width="88" height="136" rx="8" fill="url(#gGreyDn)"/><g fill="#ccc"><path d="M1302 516H1369V542H1302ZM1302 554H1369V580H1302ZM1302 592H1369V617H1302Z"/></g></svg>
      </div><hr><div class="c1">
        <svg class="rb dk" preserveAspectRatio="none" viewBox="1426.500 311 107.100 168"><rect x="1436" y="327" width="88" height="136" rx="8" fill="url(#gPink)"/><path d="M1438 416H1522V461H1438Z" fill="#ff7ab8" fill-opacity=".6" stroke="none"/><path d="M1436 410H1498V416H1524"/><ellipse cx="1442" cy="416" rx="7" ry="12" fill="#fff"/><ellipse cx="1498" cy="416" rx="8" ry="14" fill="#fff"/></svg>
        <svg class="rb dk" preserveAspectRatio="none" viewBox="1426.500 480 107.100 168"><rect x="1436" y="495" width="88" height="136" rx="8" fill="#6cc030"/><g stroke="none"><path d="M1438 497H1458V530H1438Z" fill="#dff0c8"/><path d="M1480 497H1502V530H1480ZM1458 530H1480V564H1458ZM1502 530H1522V564H1502ZM1480 564H1502V598H1480Z" fill="#a8e040"/><path d="M1458 564H1480V598H1458Z" fill="#186010"/><path d="M1458 598H1480V629H1458Z" fill="#0a3a08"/><path d="M1480 598H1502V629H1480Z" fill="#58a828"/><path d="M1502 598H1522V629H1502Z" fill="#78f0b8"/><path d="M1502 497H1522V530H1502Z" fill="#80e088"/></g><rect x="1436" y="495" width="88" height="136" rx="8"/></svg>
      </div></div><footer>Input</footer></div>
    <div class="grp" style="width:217px"><div class="cells"><div class="c1">
        <svg class="rb dk" preserveAspectRatio="none" viewBox="14.700 311 110.600 168"><path d="M84 345Q60 370 50 400M84 345Q94 380 90 410" stroke="#6a2a18"/><path d="M42 378Q46 334 84 336Q78 376 42 378Z" fill="#6fae30" stroke="#3f7818" stroke-width="1"/><g fill="url(#gRed)" stroke="none"><ellipse cx="49" cy="420" rx="18" ry="28"/><ellipse cx="90" cy="433" rx="18" ry="28"/></g></svg>
        <svg class="rb dk" preserveAspectRatio="none" viewBox="14.700 480 110.600 168"><rect x="26" y="495" width="90" height="138" rx="8" fill="url(#gTree)" stroke-width="3"/><path d="M26 618H116V634H26Z" fill="#000"/><ellipse cx="71" cy="546" rx="36" ry="34" fill="#222" fill-opacity=".3" stroke="none"/><path d="M71 620V576" stroke-width="4"/><path d="M71 582L48 548M71 574L94 544M71 576L66 524M71 572L80 518M55 558L36 550M58 562L40 574M60 554L50 522M88 552L106 540M86 556L108 570M84 548L92 516M50 540L38 528M94 536L104 524M66 534L60 514M46 570L36 566M98 564L110 556" stroke-width="2"/></svg>
      </div><hr><div class="c1">
        <svg class="rb dk" preserveAspectRatio="none" viewBox="164.700 311 110.600 168"><path d="M181 375H215V348L262 396L215 444V415H181Z" fill="#555"/></svg>
        <svg class="rb dk" preserveAspectRatio="none" viewBox="164.700 480 110.600 168"><path d="M181 544H215V517L262 564L215 610V583H181Z" fill="#f2f2f2" stroke="#777"/></svg>
      </div><hr><div class="c1">
        <svg class="rb dk" preserveAspectRatio="none" viewBox="314.700 311 110.600 168"><g transform="rotate(12 372 390)"><ellipse cx="360" cy="384" rx="25" ry="46" fill="#d6d6d6" stroke="#666"/><ellipse cx="360" cy="394" rx="9" ry="16" fill="#555" stroke="none"/><ellipse cx="390" cy="408" rx="23" ry="40" fill="#e5568c" stroke="#8c2450"/><ellipse cx="386" cy="418" rx="8" ry="14" fill="#9c1c50" stroke="none"/></g></svg>
        <svg class="rb dk" preserveAspectRatio="none" viewBox="314.700 480 110.600 168"><path d="M356 508H376L378 556L395 614Q366 630 337 614L354 556Z" fill="#eee" stroke="#666"/><path d="M350 566H381L395 614Q366 630 337 614Z" fill="#d43c78" stroke="#902050"/></svg>
      </div></div><footer>Util</footer></div>
    <div class="grp" style="width:480px"><div class="cells"><div class="c1">
        <svg class="rb dk" preserveAspectRatio="none" viewBox="456.700 311 110.600 168"><g fill="#000" stroke="none"><path d="M512 350L524 338L540 340L550 354V370L534 376L516 368ZM478 368L492 360L520 374V392L504 398L478 384ZM486 408L512 404V418L490 456H474ZM528 388L540 398L549 440L538 456L526 420Z"/></g></svg>
        <svg class="rb dk" preserveAspectRatio="none" viewBox="456.700 480 110.600 168"><path d="M480 618Q490 524 548 517M500 618Q508 560 548 549M520 618Q530 586 548 580" stroke="#333"/></svg>
      </div><hr><div class="c1">
        <svg class="rb dk" preserveAspectRatio="none" viewBox="612.700 311 110.600 168"><path d="M638 344L646 340L699 355L694 376L676 372L662 452L646 446L656 366L638 362Z"/></svg><i></i>
      </div><hr><div class="c1">
        <svg class="rb dk" preserveAspectRatio="none" viewBox="759.700 311 110.600 168"><path d="M800 342Q782 334 779 356Q782 378 790 390L836 430Q854 416 848 382ZM800 342Q808 360 790 390M779 360L784 420L832 458V428"/></svg><i></i>
      </div><hr><div class="c3">
        <svg class="rb dk" preserveAspectRatio="none" viewBox="907.700 311 110.600 168"><g stroke="#444"><path d="M942 355H1004L986 448H924ZM938 374H1000M928 430H988"/></g></svg>
        <svg class="rb dk" preserveAspectRatio="none" viewBox="1019.700 311 110.600 168"><path d="M1038 396L1066 332H1112V396L1084 460H1038ZM1038 396H1084L1112 332M1084 396V460M1066 332V380" stroke="#333"/><path d="M1042 456V420L1064 412V452Z"/></svg>
        <svg class="rb dk" preserveAspectRatio="none" viewBox="1131.700 311 110.600 168"><path d="M1146 368L1180 336L1220 356L1224 408L1196 456L1150 434ZM1168 374H1200V424H1168ZM1184 398H1200V424H1184Z" stroke="#333"/></svg>
        <svg class="rb dk" preserveAspectRatio="none" viewBox="907.700 480 110.600 168"><g stroke="#222" stroke-width="1.500"><ellipse cx="943" cy="530" rx="18" ry="27"/><ellipse cx="989" cy="530" rx="17" ry="27"/><ellipse cx="943" cy="597" rx="18" ry="27"/><ellipse cx="988" cy="597" rx="17" ry="27"/></g></svg>
        <svg class="rb dk" preserveAspectRatio="none" viewBox="1019.700 480 110.600 168"><path d="M1040 524L1058 504L1112 532L1114 578L1108 614L1062 606L1040 580ZM1040 524L1068 548L1112 532M1068 548L1062 606" stroke="#222"/><g stroke-width="4" stroke-linecap="round"><path d="M1082 566h1M1100 568h1M1078 590h1M1098 594h1M1052 566h1M1074 524h1"/></g></svg>
        <svg class="rb dk" preserveAspectRatio="none" viewBox="1131.700 480 110.600 168"><path d="M1222 506V608L1206 604L1200 616L1188 624L1160 618L1148 590L1144 560L1158 580L1170 576L1164 562L1176 566L1190 560L1192 548L1184 538L1190 518L1202 536Z" stroke="#222"/></svg>
      </div><hr><div class="c1">
        <svg class="rb dk" preserveAspectRatio="none" viewBox="1279.700 311 110.600 168"><path d="M1310 338H1376L1358 460H1296V410ZM1296 460L1310 410" stroke="#888"/><path d="M1310 338L1296 410H1358L1372 340" stroke="#333"/><path d="M1322 348L1328 360L1334 346M1328 360L1324 374M1338 370L1350 396M1350 368L1338 398"/></svg>
        <svg class="rb dk" preserveAspectRatio="none" viewBox="1279.700 480 110.600 168"><path d="M1350 494L1376 536L1362 556L1366 634L1330 578L1320 602L1294 560ZM1350 494L1340 516L1362 556L1330 578" stroke="#222"/></svg>
      </div></div><footer>OpenNest</footer></div>
  </div>
  <div class="gh-bar">
    <button class="w52"><svg width="30" height="34" viewBox="0 0 30 34"><path d="M7 12V4H18L22 8V14" fill="#eee" stroke="#888"/><path d="M3 32V14H12L14 17H27V32Z" fill="#8fcf55" stroke="#5d9a30"/></svg></button>
    <button class="w52"><svg width="30" height="34" viewBox="0 0 30 34"><path d="M1 3H29V32H4L1 29Z" fill="#2f62d8" stroke="#16398c"/><path d="M7 3H23V14H7Z" fill="#dfe6f2"/><path d="M7 21H22V32H7Z" fill="#cdd3e0"/><path d="M9 23H14V31H9Z" fill="#1c4fc0"/></svg></button>
    <u></u>
    <div class="combo"><span>55%</span><em><svg width="16" height="12" viewBox="0 0 16 12"><path d="M2 2L8 9L14 2" fill="none" stroke="#fff" stroke-width="3"/></svg></em></div>
    <button class="w64" style="margin-left:6px"><svg width="32" height="30" viewBox="0 0 32 30"><path d="M2 10V2H12M20 2H30V10M30 20V28H20M12 28H2V20" fill="none" stroke="#111" stroke-width="4"/><path d="M12 11L20 19M20 11L12 19" stroke="#111" stroke-width="3.500"/></svg></button>
    <button class="w64" style="margin-left:22px"><svg width="30" height="24" viewBox="0 0 32 26"><path d="M2 13Q16 -5 30 13Q16 29 2 13Z" fill="#fff" stroke="#44505c" stroke-width="2"/><circle cx="16" cy="13" r="8" fill="#4fa3dc"/><circle cx="16" cy="13" r="3.500" fill="#123"/></svg></button>
    <button class="w52" style="margin-left:20px"><svg width="32" height="30" viewBox="0 0 32 30"><path d="M3 18Q3 12 7 15Q10 19 5 25Q8 31 17 24" fill="none" stroke="#5a2018" stroke-width="2.500"/><path d="M14 25L15 15L28 2L29 14L20 24Z" fill="#d8392a"/><path d="M17 15L28 2L27 8L20 18Z" fill="#f0a080"/></svg></button>
    <div class="grow"></div>
    <button class="w52"><svg width="32" height="32" viewBox="0 0 32 32"><path d="M9 14L15 2L24 10L22 20H10Z" fill="#ddd" stroke="#aaa"/><ellipse cx="16" cy="22" rx="11" ry="7" fill="#3a3a3a"/></svg></button>
    <button class="w52 g2"><svg width="32" height="32" viewBox="0 0 32 32"><path d="M3 20L16 3L29 11L17 29L6 27Z" fill="#f2f2f2" stroke="#888" stroke-width="2"/><path d="M9 20L17 9M15 24L24 12" stroke="#aaa" stroke-width="3"/></svg></button>
    <button class="w52 g2 blue"><svg width="34" height="34" viewBox="0 0 32 32"><path d="M3 19Q6 8 16 3L29 10Q28 22 17 30L6 27Z" fill="url(#gRed)"/><path d="M18 8Q24 6 26 12" fill="none" stroke="#7a0c08" stroke-width="2"/></svg></button>
    <u class="s2"></u>
    <button class="w52"><svg width="32" height="32" viewBox="0 0 32 32"><path d="M4 3L12 8M22 28L28 30" stroke="#333" stroke-width="1.500"/><path d="M8 8L20 4L28 10Q29 20 22 28L11 26Q14 16 8 8Z" fill="#35a3a0" stroke="#1c6a6a"/><path d="M18 9Q23 7 25 13" stroke="#145" fill="none" stroke-width="2"/></svg></button>
    <button class="w52"><svg width="32" height="32" viewBox="0 0 32 32"><path d="M5 17L10 12L23 28L12 28Q4 24 5 17Z" fill="#ddd" stroke="#999"/><path d="M10 8L20 3L29 11Q29 18 24 26Z" fill="#62a527" stroke="#38700e"/></svg></button>
    <button class="w52"><svg width="32" height="32" viewBox="0 0 32 32"><circle cx="16" cy="16" r="13" fill="#d8d8d8" stroke="#888"/><path d="M16 3A13 13 0 0 0 16 29Z" fill="#e6862c"/></svg></button>
    <u class="s3"></u>
    <button class="w64"><svg width="26" height="26" viewBox="0 0 28 28"><path d="M10 2H18L26 10V19L18 26H10L2 18V10Z" fill="url(#gSky)" stroke="#2c5aa8"/></svg></button>
  </div>
  <div class="canvas">
    <div class="strip"></div>
    <svg id="graph" width="1595" height="1358" viewBox="1469 356 1595 1358">
      <defs>
        <linearGradient id="nG" x1="0" y1="0" x2="0" y2="1"><stop offset="0" stop-color="#ececec"/><stop offset="1" stop-color="#cfcfcf"/></linearGradient>
        <linearGradient id="nL" x1="0" y1="0" x2="0" y2="1"><stop offset="0" stop-color="#b8b8c6"/><stop offset="1" stop-color="#9c9caa"/></linearGradient>
        <linearGradient id="nO" x1="0" y1="0" x2="0" y2="1"><stop offset="0" stop-color="#f6bb5a"/><stop offset="1" stop-color="#f2a03c"/></linearGradient>
        <linearGradient id="nV" x1="0" y1="0" x2="0" y2="1"><stop offset="0" stop-color="#93d350"/><stop offset="1" stop-color="#77b735"/></linearGradient>
        <linearGradient id="cD" x1="0" y1="0" x2="0" y2="1"><stop offset="0" stop-color="#636363"/><stop offset="1" stop-color="#3f3f3f"/></linearGradient>
        <linearGradient id="cV" x1="0" y1="0" x2="0" y2="1"><stop offset="0" stop-color="#4d6e4a"/><stop offset="1" stop-color="#294826"/></linearGradient>
        <linearGradient id="dial"><stop offset="0" stop-color="#c4c4c4"/><stop offset=".12" stop-color="#ececec"/><stop offset=".5" stop-color="#eee"/><stop offset=".68" stop-color="#b4b4b4"/></linearGradient>
        <radialGradient id="comp"><stop offset="0" stop-color="#e6e6e6"/><stop offset="1" stop-color="#8a8a8a"/></radialGradient>
      </defs>
      <g id="wires"></g>
      <g id="nodes"></g>
      <path d="M2957 1613L2971 1616V1626L2966 1628Q2976 1612 2996 1609Q3008 1606 3011 1616Q2980 1622 2966 1655Q2958 1640 2967 1628L2963 1626Z" fill="#000"/>
      <circle cx="3006" cy="1655" r="40" fill="#fff" stroke="#333" stroke-width="2"/>
      <circle cx="3006" cy="1655" r="36" fill="url(#comp)"/>
      <path d="M2977 1630L2985 1637L2980 1622ZM3022 1632L3034 1622L3034 1634ZM2978 1688L2988 1676L2976 1680ZM3026 1671L3036 1676L3032 1686Z" fill="#fff"/>
    </svg>
    <div class="stub"></div>
  </div>
  <footer class="gh-status"><span>...</span><span class="ver">1.0.0007</span></footer>
</section>
<script src="scene.js"></script>
</body>
</html>
```
FILE: styles.css
```css
* { box-sizing: border-box; }
body { margin: 0; width: 3064px; height: 1752px; overflow: hidden; position: relative; background: #9fd6ea; font-family: Inter, "Liberation Sans", sans-serif; color: #262626; }
.defs { position: absolute; }
.nss, .ic *, .rb *, .edge * { vector-effect: non-scaling-stroke; }
svg { display: block; flex: none; }

/* modelling window */
.rhino { position: absolute; left: 0; top: 0; width: 1560px; height: 1752px; display: flex; flex-direction: column; background: #ececec; border-radius: 20px 0 0 20px; overflow: hidden; }
.rh-title { height: 52px; background: #e8e9eb; display: flex; align-items: center; padding-left: 12px; flex: none; }
.lights { display: flex; gap: 16px; }
.lights i { width: 24px; height: 24px; border-radius: 50%; display: flex; align-items: center; justify-content: center; }
.lights.off i { background: #d0d1d3; border: 1.5px solid #b0b1b3; }
.edited::after { content: ""; width: 8px; height: 8px; border-radius: 50%; background: #555; }
.doc { margin-left: 1142px; font-size: 26.5px; font-weight: 700; color: #a9aaac; letter-spacing: 0; white-space: nowrap; }
.rh-modes { height: 62px; background: #e8e9eb; display: flex; align-items: flex-start; padding: 7px 0 0 20px; flex: none; font-weight: 700; font-size: 24.3px; color: #aeafb1; white-space: nowrap; }
.pill { height: 30px; margin-top: 4px; line-height: 31px; background: #c5c6c9; color: #a9aaad; border-radius: 6px; text-align: center; }
.p1 { margin-left: 89px; width: 162px; }
.p2 { margin-left: 17px; width: 120px; }
.mode { margin-top: 4px; line-height: 31px; }
.m1 { margin-left: 38px; width: 137px; }
.m2 { width: 200px; }
.m3 { width: 161px; }
.rh-tabs { height: 34px; flex: none; display: flex; padding-left: 9px; background: #e4e4e4; border-top: 2px solid #8b8b8b; border-bottom: 1.5px solid #909090; }
.rh-tabs span { flex: none; border-right: 2px solid #949494; border-radius: 0 9px 0 9px; text-align: center; font-size: 19px; font-weight: 700; line-height: 28px; color: #b1b1b1; letter-spacing: .35px; white-space: nowrap; }
.rh-tabs .lft { text-align: left; padding-left: 19px; }
.rh-tabs .on { background: #ececec; border-left: 2px solid #949494; border-radius: 9px 9px 0 0; height: 33px; }
.rh-tools { height: 62px; flex: none; display: flex; background: #ececec; margin-left: -5px; border-bottom: 2px solid #d5d5d5; }
.ic { width: 60px; height: 60px; fill: none; stroke: #000; stroke-width: 2; overflow: hidden; }
.ic .tri { fill: #333; stroke: none; }
.wheel { width: 42px; height: 42px; margin: 9px 0 0 7px; border-radius: 50%; border: 2px solid #000; background: radial-gradient(#f0f0f0 0 38%, transparent 40%), conic-gradient(#e33, #b2c, #33e, #2bd, #3d8, #3d6, #86d, #c4a, #e33); flex: none; }
.rh-body { flex: 1; display: flex; min-height: 0; }
.panel { width: 318px; flex: none; background: #edeef0; border-right: 2px solid #838383; }
.panel-head { height: 52px; border-bottom: 2px solid #c9c9c9; background: linear-gradient(#fafafa, #e3e3e3); }
.cmd { margin: 22px 0 0 14px; width: 284px; height: 39px; border: 1px solid #dcdcdc; border-bottom: 2px solid #bdbdbd; background: #fff; color: #bfbfbf; font-size: 25.5px; line-height: 36px; padding-left: 6px; letter-spacing: -.3px; }
.toolgrid { margin: 16px 0 0 -5px; width: 300px; display: grid; grid-template-columns: repeat(5, 60px); grid-auto-rows: 60px; height: 309px; }
.snaps { border-top: 2px solid #838383; padding-top: 11px; font-size: 21px; letter-spacing: .4px; }
.snaps label { display: flex; align-items: center; height: 40px; padding-left: 36px; gap: 9px; white-space: nowrap; }
.snaps .rad { height: 30px; padding-left: 32px; }
.snaps i { width: 24px; height: 24px; border-radius: 5px; background: linear-gradient(#f6f6f6, #fff 30%); border: 1px solid #cfcfcf; border-top-color: #bbb; display: flex; align-items: center; justify-content: center; flex: none; }
.snaps .rad i { border-radius: 50%; }
.rad .sel::after { content: ""; width: 9px; height: 9px; border-radius: 50%; background: #222; }
.checks { padding-top: 6px; }
.dis { color: #b3b4b5; }
.snaps .dis i { background: #f1f2f2; border-color: #dcdcdc; }
.last { margin-top: 36px; }
.view { flex: 1; min-width: 0; display: flex; flex-direction: column; }
.viewbar { height: 52px; flex: none; border-bottom: 2px solid #707070; background: linear-gradient(#fafafa, #e3e3e3); display: flex; align-items: flex-start; padding: 9px 0 0 19px; font-size: 25.5px; color: #6c6c6c; letter-spacing: -.4px; }
.viewbar .one { margin-left: 32px; }
.viewbar b { width: 2px; height: 28px; background: #808080; margin-top: 3px; flex: none; }
.viewbar span { text-align: center; line-height: 32px; margin-top: -3px; flex: none; white-space: nowrap; }
.viewbar .cur { color: #2a73f5; }
.scene { flex: 1; background: #9da1a9; position: relative; }
.vlabel { position: absolute; left: 2px; top: 2px; width: 160px; height: 38px; background: #8f8f8f; color: #fff; font-weight: 700; font-size: 24.5px; letter-spacing: -.2px; line-height: 38px; padding-left: 8px; }
.edge { fill: none; stroke: #8d150f; stroke-width: 1.200; }
.marks text { font: 10px "Liberation Sans", sans-serif; fill: #444; text-anchor: middle; }
.axis text { font: 27px Inter, sans-serif; fill: #666b70; text-anchor: middle; }
.rh-status { height: 54px; flex: none; background: linear-gradient(#d9d9d9, #cecece); display: flex; align-items: center; padding: 6px 0 0 6px; gap: 6px; font-size: 23px; letter-spacing: -.4px; }

/* node editor window */
.gh { position: absolute; left: 1468px; top: 0; width: 1596px; height: 1752px; display: flex; flex-direction: column; background: #ececec; border-left: 1px solid #999; border-radius: 20px 0 0 20px; box-shadow: 0 20px 50px 16px rgba(0, 0, 0, .42); }
.gh-title { height: 51px; flex: none; border-bottom: 2px solid #c6c6c8; background: #eff0f4; border-radius: 20px 0 0 0; display: flex; padding: 10px 0 0 15px; }
.gh-title .lights i:nth-child(1) { background: #ec6a5e; }
.gh-title .lights i:nth-child(2) { background: #f4bf4f; }
.gh-title .lights i:nth-child(3) { background: #61c554; }
.gh-title h1 { margin: -5px 0 0 470px; font-size: 26.5px; line-height: 32px; font-weight: 700; color: #454547; letter-spacing: 0; white-space: nowrap; }
.gh-tabs { height: 44px; flex: none; display: flex; border-bottom: 2px solid #9d9d9d; font: 22.7px/46px "Liberation Sans", sans-serif; color: #7a7a7a; white-space: nowrap; overflow: hidden; }
.gh-tabs span { flex: none; }
.gh-tabs .on { width: 104px; margin-right: 13px; padding-left: 11px; line-height: 36px; height: 44px; color: #1c1c1c; border: 2px solid #9d9d9d; border-left: 1px solid #bbb; border-bottom: 0; border-radius: 10px 12px 0 0; background: linear-gradient(#fff 40%, #e2e2e2); margin-top: -1px; }
.ribbon { height: 175px; flex: none; display: flex; align-items: flex-start; gap: 7px; padding: 5px 0 0 5px; background: linear-gradient(#dadada, #ebebeb 150px); border-bottom: 2px solid #d0d0d0; }
.grp { height: 146px; flex: none; border: 2px solid #8a8a8a; border-radius: 8px; background: linear-gradient(#d8d8d8, #e4e4e4); box-shadow: inset 0 2px 0 #f4f4f4; overflow: hidden; }
.cells { height: 115px; display: flex; padding: 1px 0 0 2px; }
.cells > div { display: grid; grid-auto-rows: 56px; height: 112px; }
.c1 { grid-template-columns: 56px; }
.c2 { grid-template-columns: 56px 56px; }
.c3 { grid-template-columns: 56px 56px 56px; }
.cells hr { margin: 6px 9px; width: 2px; height: 104px; border: 0; background: linear-gradient(transparent, #b4b4b4, transparent); }
.rb { width: 56px; height: 56px; fill: none; stroke: #fff; stroke-width: 2; }
.rb.dk { stroke: #000; }
.tx { font-family: "Liberation Serif", serif; font-weight: 700; fill: #eee; stroke: none; text-anchor: middle; }
.num { font: italic 700 27px "Liberation Sans", sans-serif; }
.grp footer { height: 29px; background: linear-gradient(#3e3e3e, #1f1f1f); color: #e2e2e2; font: 21px/24px "Liberation Sans", sans-serif; text-align: center; position: relative; padding-right: 20px; }
.grp footer.l { text-align: left; padding-left: 10px; }
.grp footer::after { content: ""; position: absolute; right: 5px; top: 8px; width: 12px; height: 13px; background: #aaa; clip-path: polygon(42% 0, 58% 0, 58% 35%, 100% 45%, 50% 100%, 0 45%, 42% 35%); }
.gh-bar { height: 62px; flex: none; background: #edeef0; display: flex; align-items: flex-start; padding: 12px 16px 0 1px; }
.gh-bar button { height: 40px; padding: 0; border: 0; border-radius: 9px; background: #fff; box-shadow: 0 1px 2px rgba(0, 0, 0, .3); display: flex; align-items: center; justify-content: center; flex: none; }
.w52 { width: 52px; }
.w64 { width: 64px; }
.gh-bar .w52:nth-child(2) { margin-left: 4px; }
.gh-bar .g2 { margin-left: 2px; }
.gh-bar .blue { background: linear-gradient(#4a94fa, #2b70f3); }
.gh-bar u { width: 2px; height: 32px; margin: 4px 10px 0 8px; background: #dcdddf; flex: none; }
.gh-bar .s2 { margin: 4px 14px 0; }
.gh-bar .s3 { margin: 4px 4px 0; }
.combo { width: 118px; height: 41px; background: #fff; border-radius: 9px; box-shadow: 0 1px 2px rgba(0, 0, 0, .3); display: flex; justify-content: space-between; align-items: center; padding: 0 4px 0 7px; font-size: 24px; letter-spacing: -.6px; }
.combo em { width: 32px; height: 32px; border-radius: 7px; background: linear-gradient(#4a94fa, #2b70f3); display: flex; align-items: center; justify-content: center; }
.grow { flex: 1; }
.canvas { flex: 1; position: relative; background: #dcd9d2; min-height: 0; overflow: hidden; }
.strip { height: 24px; background: #d6d3cb; border-bottom: 3px solid #000; }
.stub { position: absolute; left: 0; bottom: 0; width: 14px; height: 57px; border: 2px solid #000; border-left: 0; background: linear-gradient(#d8d8d8 38%, #8a8a8a 40%); }
.wire { fill: none; stroke-linecap: butt; }
.dialtext { font: 14px "Open Sans", sans-serif; fill: #000; text-anchor: middle; }
.gh-status { height: 38px; flex: none; border-top: 2px solid #d2d2d4; background: radial-gradient(ellipse 720px 60px at 0 110%, #d2d3d5 40%, #ecedef); display: flex; justify-content: space-between; padding: 6px 137px 0 7px; font-size: 23.3px; line-height: 32px; border-radius: 0 0 0 20px; }
```
FILE: scene.js
```js
const NS = 'http://www.w3.org/2000/svg';
function add(parent, tag, attrs, text) {
  const e = document.createElementNS(NS, tag);
  for (const k in attrs) e.setAttribute(k, attrs[k]);
  if (text) e.textContent = text;
  parent.appendChild(e);
  return e;
}

/* construction plane: unit square projected onto its four screen corners */
const floor = document.getElementById('floor');
const [x0, y0, x1, y1, x2, y2, x3, y3] = [678, 1373, 1489, 1438, 1132, 1729, 87, 1607];
const dx1 = x1 - x2, dx2 = x3 - x2, dx3 = x0 - x1 + x2 - x3;
const dy1 = y1 - y2, dy2 = y3 - y2, dy3 = y0 - y1 + y2 - y3;
const det = dx1 * dy2 - dx2 * dy1;
const g = (dx3 * dy2 - dx2 * dy3) / det, h = (dx1 * dy3 - dx3 * dy1) / det;
const a = x1 - x0 + g * x1, b = x3 - x0 + h * x3, d = y1 - y0 + g * y1, e = y3 - y0 + h * y3;
const P = (u, v) => {
  const w = g * u + h * v + 1;
  return ((a * u + b * v + x0) / w).toFixed(1) + ' ' + ((d * u + e * v + y0) / w).toFixed(1);
};
let minor = '', major = '';
for (let i = 0; i <= 140; i++) {
  const t = i / 140, s = `M${P(t, 0)}L${P(t, 1)}M${P(0, t)}L${P(1, t)}`;
  if (i % 5) minor += s; else major += s;
}
add(floor, 'path', { d: minor, stroke: '#8e9399', 'stroke-width': .7, opacity: .55 });
add(floor, 'path', { d: major, stroke: '#83888c', 'stroke-width': 1.3 });
add(floor, 'path', { d: `M${P(.5, .5)}L${P(1, .5)}`, stroke: '#944448', 'stroke-width': 2 });

/* wires: x1, y1, x2, y2, width, handle length, start colour, end colour */
const K = '#595854', GR = '#8ec63f', SG = '#a9a8a2', OR = '#ec8158', BK = '#1c1c1c';
const wires = [
  [1753, 564, 1791, 562.5, 4], [1753, 585, 1791, 585, 4], [1752, 609, 1791, 607, 4],
  [1856, 585, 1763, 737.5, 3.5, 110], [1702, 759.5, 1763, 759.5, 4], [1700, 782, 1763, 782, 4],
  [1824, 749, 1948, 809.5, 3.5, 0, SG, GR], [1700, 850, 1948, 837.5, 3.5, 0, SG, GR],
  [2010, 824, 2409, 650, 3.4, 0, GR, SG], [2010, 824, 2920, 489.5, 3.4, 0, GR, SG], [2010, 824, 2292, 1070.5, 3.4, 0, GR, SG],
  [1961, 935, 2044, 946, 4, 0, OR, OR], [1957, 1005, 2044, 990, 4, 0, OR, OR], [1997, 968, 2044, 968, 4],
  [2479, 650, 2521, 811, 5.5, 116], [2576, 811, 2633, 732, 5.5, 46], [2576, 811, 2658, 812, 5],
  [2694, 732, 2767, 652.5, 3.5, 48], [2830, 630, 2920, 556, 6, 50], [2940, 696, 2920, 578.5, 3.5, 92],
  [2791, 812, 2872, 811, 5], [2794, 843, 2872, 835, 3.5],
  [1804, 1257, 1845, 1257, 4, 0, BK, BK], [1804, 1279, 1845, 1279, 4, 0, BK, BK], [1803, 1303, 1845, 1301, 4, 0, BK, BK],
  [1911, 1279, 1972, 1368, 3.5, 50], [1911, 1347, 1972, 1390, 3.5], [1911, 1381, 1972, 1412, 3.5],
  [2034, 1379, 2157, 1440, 3.5], [1910, 1481, 2157, 1467, 3.5],
  [2219, 1454, 2292, 1093.5, 3.5, 262], [2219, 1454, 2775, 1140, 3.5], [2219, 1454, 2265, 1460, 3.5], [2219, 1454, 2265, 1449, 3, 14, BK, BK],
  [2335, 1460, 2375, 1461, 5], [2431, 1461, 2489, 1382, 5.5, 46], [2431, 1461, 2514, 1462, 5],
  [2549, 1382, 2623, 1303, 3.5, 48], [2685, 1280, 2775, 1206, 6, 50], [2796, 1345, 2775, 1229, 3.5, 92],
  [2646, 1462, 2727, 1461, 5], [2649, 1493, 2727, 1485, 3.5]
];
const wl = document.getElementById('wires');
wires.forEach(([xa, ya, xb, yb, w, hd, c1, c2], i) => {
  const k = hd || (xb - xa) / 2;
  let stroke = c1 || K;
  if (c1 && c1 !== c2) {
    const lg = add(wl, 'linearGradient', { id: 'w' + i, gradientUnits: 'userSpaceOnUse', x1: xa, y1: ya, x2: xb, y2: yb });
    add(lg, 'stop', { offset: 0, 'stop-color': c1 });
    add(lg, 'stop', { offset: .5, 'stop-color': '#879a68' });
    add(lg, 'stop', { offset: 1, 'stop-color': c2 });
    stroke = `url(#w${i})`;
  }
  add(wl, 'path', { class: 'wire', d: `M${xa} ${ya}C${xa + k} ${ya} ${xb - k} ${yb} ${xb} ${yb}`, stroke, 'stroke-width': w });
});

const nl = document.getElementById('nodes');
function box(xa, ya, xb, yb, fill, stroke, r, w) {
  add(nl, 'rect', { x: xa, y: ya, width: xb - xa, height: yb - ya, rx: r, fill: `url(#${fill})`, stroke, 'stroke-width': w });
}
function shadow(xa, ya, xb, yb) {
  add(nl, 'rect', { x: xa - 1, y: ya + 1, width: xb - xa + 2, height: yb - ya + 1.5, rx: 3, fill: '#000', opacity: .18 });
}
/* sliders: left, top, right, bottom, name split */
[
  [1541, 553, 1753, 574, 1620], [1541, 574, 1753, 596, 1620], [1540, 598, 1752, 620, 1619],
  [1524.5, 749, 1702, 770.5, 1569], [1523.5, 771, 1700, 793, 1567], [1521.5, 838, 1700, 860.5, 1567],
  [1822.5, 957, 1997, 979, 1864], [2766.5, 685, 2940.5, 707, 2803.5], [2620, 832, 2794.5, 854, 2653],
  [1592.5, 1246, 1804.5, 1268, 1672], [1592.5, 1268, 1804.5, 1291, 1672], [1591.5, 1291.5, 1803.5, 1314, 1671],
  [1733.5, 1336, 1911, 1358, 1778.5], [1734.5, 1370, 1911, 1392, 1778.5], [1731.5, 1470, 1910, 1492, 1777.5],
  [2476, 1482, 2649.5, 1504, 2508.5], [2622, 1335, 2796.5, 1357, 2659]
].forEach(([l, t, r, bt, s]) => {
  shadow(l, t, r, bt);
  box(l, t, r, bt, 'nG', '#4a4a4a', 3, 1.4);
  box(l, t, s, bt, 'nL', '#5a5a64', 2, 1.2);
});
/* plain parameters */
[[2520.5, 800, 2576.5, 822], [2375, 1450, 2431, 1472]].forEach(p => { shadow(...p); box(...p, 'nG', '#444', 3, 1.4); });
[[1904.5, 924, 1960.5, 946], [1901.5, 993, 1957, 1015.5]].forEach(p => { shadow(...p); box(...p, 'nO', '#7a3314', 3, 1.4); });
/* components: bounds, core bounds, kind */
[
  [1790.5, 549, 1856, 620, 1806, 1833, 'G'], [1763, 724, 1824, 817, 1778.5, 1805.5, 'G'],
  [1948, 794, 2010.5, 854, 1964, 1991, 'V'], [2044, 932.5, 2107.5, 1003.5, 2061, 2088, 'O'],
  [2409, 614.5, 2479, 685.5, 2424, 2451, 'L'], [2919.5, 476, 2983, 591, 2936.5, 2964, 'G'],
  [2767, 594.5, 2830, 665.5, 2784, 2811, 'L'], [2633, 714.5, 2694.5, 750, 2649, 2676, 'G'],
  [2292, 1058, 2354, 1106.5, 2307.5, 2334.5, 'G'],
  [1845, 1243.5, 1911, 1315, 1860, 1887, 'L'], [1972.5, 1354.5, 2034, 1447.5, 1987, 2014.5, 'L'],
  [2157, 1424, 2219, 1484.5, 2174, 2200.5, 'L'], [2265, 1424, 2335, 1495.5, 2280, 2307, 'L'],
  [2488.5, 1364.5, 2549, 1400, 2504, 2530.5, 'G'], [2622.5, 1244.5, 2685, 1316, 2639, 2666, 'L'],
  [2774.5, 1126.5, 2836.5, 1241.5, 2791.5, 2818.5, 'G']
].forEach(([l, t, r, bt, cl, cr, k]) => {
  shadow(l, t, r, bt);
  box(l, t, r, bt, 'n' + k, { G: '#444', L: '#3f3f48', O: '#7a2c10', V: '#26591a' }[k], 3, 1.6);
  box(cl, t + 2.5, cr, bt - 2, k === 'V' ? 'cV' : 'cD', '#0c0c0c', 4, 1.5);
});
/* torn-edge components */
[[2872, 796, 849.5], [2727, 1446, 1500]].forEach(([l, t, bt]) => {
  let p = `M${l + 3} ${t}H${l + 45}`;
  const n = 6, st = (bt - t) / n;
  for (let i = 0; i < n; i++) p += `L${l + 48.5} ${t + st * (i + .5)}L${l + 45} ${t + st * (i + 1)}`;
  p += `H${l + 3}Q${l} ${bt} ${l} ${bt - 3}V${t + 3}Q${l} ${t} ${l + 3} ${t}Z`;
  add(nl, 'path', { d: p, fill: 'url(#nG)', stroke: '#444', 'stroke-width': 1.5 });
  box(l + 15, t + 2, l + 42, bt - 2, 'cD', '#0c0c0c', 4, 1.5);
});
/* numeric dials */
[[2657.5, 801], [2513.5, 1451.5]].forEach(([l, t]) => {
  shadow(l, t, l + 133, t + 22);
  box(l, t, l + 133, t + 22, 'nG', '#555', 3, 2);
  box(l + 11, t + 2.5, l + 122, t + 19.5, 'dial', '#111', 0, 1.5);
  add(nl, 'rect', { x: l + 88, y: t + 2.5, width: 34, height: 17, fill: '#fff', stroke: '#000', 'stroke-width': 1.5 });
  add(nl, 'text', { class: 'dialtext', x: l + 105, y: t + 16, textLength: 29, lengthAdjust: 'spacingAndGlyphs' }, '1.000');
});
```
